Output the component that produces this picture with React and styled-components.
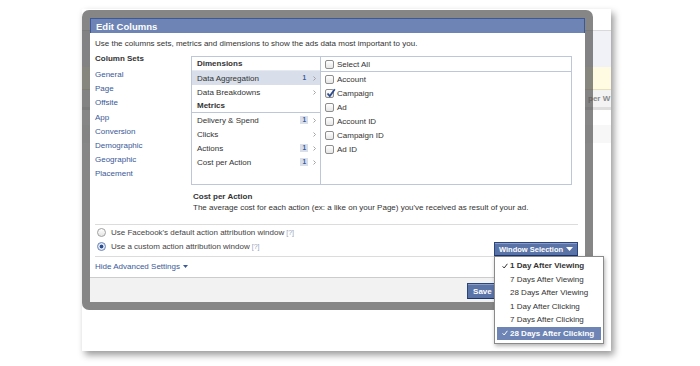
import React from 'react';
import styled, { createGlobalStyle } from 'styled-components';

const GlobalStyle = createGlobalStyle`
  html, body { margin: 0; padding: 0; background: #fff; }
  body {
    width: 700px;
    height: 366px;
    overflow: hidden;
    font-family: "Liberation Sans", Arial, sans-serif;
    font-size: 8px;
    color: #333;
  }
`;

const Stage = styled.div`
  padding: 9px 0 0 82px;
`;

const Page = styled.div`
  position: relative;
  width: 529px;
  height: 342px;
  background: #fff;
  box-shadow: 3px 4px 7px rgba(0, 0, 0, 0.4);
  display: flex;
  flex-direction: column;
`;

const Band = styled.div`
  flex: none;
  height: ${p => p.$h}px;
  box-sizing: border-box;
  background: ${p => p.$bg || '#fff'};
  border-bottom: ${p => (p.$line ? `${p.$lw || 1}px solid ${p.$line}` : 'none')};
  display: flex;
  align-items: center;
  padding-left: 506px;
  font-weight: bold;
  color: #8a8a8a;
  white-space: nowrap;
  overflow: hidden;
`;

const Dialog = styled.div`
  position: absolute;
  left: 0;
  top: 1px;
  width: 495px;
  border: 8px solid rgba(82, 82, 82, 0.7);
  border-radius: 7px;
  background-clip: padding-box;
`;

const Inner = styled.div`
  height: 284px;
  background: #fff;
  display: flex;
  flex-direction: column;
`;

const TitleBar = styled.div`
  flex: none;
  height: 15px;
  box-sizing: border-box;
  background: #6d84b4;
  border: 1px solid #3b5998;
  border-bottom: none;
  color: #fff;
  font-size: 9.5px;
  font-weight: bold;
  padding-left: 5px;
  display: flex;
  align-items: center;
`;

const Body = styled.div`
  flex: 1;
  padding: 5px 7px 0 5px;
  display: flex;
  flex-direction: column;
`;

const Intro = styled.div`
  line-height: 12px;
`;

const Columns = styled.div`
  display: flex;
  margin-top: 2px;
`;

const SetList = styled.div`
  width: 96px;
  flex: none;
  display: flex;
  flex-direction: column;
`;

const SetHeading = styled.div`
  font-weight: bold;
  line-height: 14px;
  margin-bottom: 2px;
`;

const SetLink = styled.a`
  color: #3b5998;
  line-height: 14.2px;
  text-decoration: none;
`;

const RightArea = styled.div`
  width: 381px;
  display: flex;
  flex-direction: column;
`;

const Picker = styled.div`
  margin-top: 4px;
  height: 129px;
  box-sizing: border-box;
  border: 1px solid #bdc7d8;
  display: flex;
`;

const Categories = styled.div`
  width: 129px;
  flex: none;
  box-sizing: border-box;
  border-right: 1px solid #bdc7d8;
`;

const CatHeader = styled.div`
  height: 14px;
  box-sizing: border-box;
  padding-left: 5px;
  font-weight: bold;
  display: flex;
  align-items: center;
  border-bottom: 1px solid ${p => (p.$line ? '#bdc7d8' : '#e5e9f0')};
`;

const CatRow = styled.div`
  height: 14px;
  padding: 0 4px 0 5px;
  display: flex;
  align-items: center;
  background: ${p => (p.$active ? '#d8dfea' : 'transparent')};
`;

const CatName = styled.span`
  flex: 1;
`;

const Badge = styled.span`
  height: 8px;
  line-height: 8px;
  padding: 0 2px;
  background: #d8dfea;
  color: #3b5998;
  font-size: 6.5px;
  font-weight: bold;
  margin-right: 5px;
`;

const Fields = styled.div`
  flex: 1;
  display: flex;
  flex-direction: column;
`;

const FieldRow = styled.div`
  height: ${p => (p.$head ? 15 : 14)}px;
  box-sizing: border-box;
  padding-left: 4px;
  display: flex;
  align-items: center;
  border-bottom: ${p => (p.$head ? '1px solid #bdc7d8' : 'none')};
`;

const Box = styled.span`
  width: 9px;
  height: 9px;
  box-sizing: border-box;
  border: 1px solid #8e8e8e;
  border-radius: 2px;
  background: linear-gradient(#fff, #e6e6e6);
  margin-right: 3px;
  position: relative;
  flex: none;
  svg { position: absolute; left: 0; top: -2px; }
`;

const Explain = styled.div`
  margin-top: 6px;
  padding-left: 2px;
  line-height: 11px;
`;

const ExplainTitle = styled.div`
  font-weight: bold;
`;

const Options = styled.div`
  margin-top: 11px;
  border-top: 1px solid #dcdcdc;
  border-bottom: 1px solid #dcdcdc;
`;

const OptionRow = styled.div`
  height: ${p => p.$h}px;
  display: flex;
  align-items: flex-start;
`;

const OptionLabel = styled.label`
  flex: 1;
  height: 14px;
  padding-left: 2px;
  display: flex;
  align-items: center;
  color: #444;
`;

const Radio = styled.span`
  width: 9px;
  height: 9px;
  box-sizing: border-box;
  border-radius: 50%;
  border: 1px solid ${p => (p.$on ? '#6a83b6' : '#a0a0a0')};
  background: ${p => (p.$on ? 'radial-gradient(circle, #2c4d8f 0 1.6px, #dfe6f3 2.2px)' : 'linear-gradient(#fff, #e4e4e4)')};
  margin-right: 5px;
  flex: none;
`;

const Hint = styled.span`
  color: #98a2b8;
  font-size: 7px;
  margin-left: 2px;
`;

const Dropdown = styled.div`
  position: relative;
  align-self: flex-end;
`;

const BlueButton = styled.button`
  height: ${p => p.$h || 14}px;
  box-sizing: border-box;
  padding: 0 ${p => p.$pad || 5}px;
  width: ${p => (p.$w ? `${p.$w}px` : 'auto')};
  border: 1px solid #29447e;
  border-bottom-color: #1a356e;
  background: #5b74a8;
  box-shadow: inset 0 1px 0 #8a9cc2;
  color: #fff;
  font-family: inherit;
  font-size: ${p => p.$fs || 8}px;
  font-weight: bold;
  white-space: nowrap;
  display: flex;
  align-items: center;
  justify-content: space-between;
  cursor: pointer;
`;

const GrayButton = styled(BlueButton)`
  background: #eee;
  border-color: #999 #999 #888;
  box-shadow: inset 0 1px 0 #fff;
  color: #333;
`;

const Menu = styled.div`
  position: absolute;
  top: 100%;
  left: 0;
  width: 110px;
  box-sizing: border-box;
  background: #fff;
  border: 1px solid #8a8a8a;
  box-shadow: 1px 2px 4px rgba(0, 0, 0, 0.3);
  padding: 2px 2px 3px;
  z-index: 2;
`;

const MenuItem = styled.div`
  height: 13.5px;
  padding-left: 5px;
  display: flex;
  align-items: center;
  white-space: nowrap;
  font-weight: ${p => (p.$bold ? 'bold' : 'normal')};
  background: ${p => (p.$hl ? '#6d84b4' : 'transparent')};
  color: ${p => (p.$hl ? '#fff' : '#333')};
`;

const Tick = styled.span`
  width: 8px;
  flex: none;
  display: flex;
  align-items: center;
`;

const Advanced = styled.a`
  height: 19px;
  display: flex;
  align-items: center;
  gap: 3px;
  color: #3b5998;
  text-decoration: none;
`;

const Footer = styled.div`
  flex: none;
  height: 25px;
  box-sizing: border-box;
  background: #f2f2f2;
  border-top: 1px solid #cccccc;
  display: flex;
  align-items: center;
  justify-content: flex-end;
  gap: 4px;
  padding: 2px 39px 0 0;
`;

const Chevron = () => (
  <svg width="3" height="5" viewBox="0 0 3 5">
    <path d="M0.5 0.5 L2.5 2.5 L0.5 4.5" fill="none" stroke="#9a9a9a" strokeWidth="0.9" />
  </svg>
);

const Caret = ({ color = '#fff', w = 7, h = 4 }) => (
  <svg width={w} height={h} viewBox="0 0 7 4">
    <path d="M0 0 H7 L3.5 4 Z" fill={color} />
  </svg>
);

const CheckMark = ({ color }) => (
  <svg width="6" height="6" viewBox="0 0 6 6">
    <path d="M0.6 3.3 L2.2 5 L5.4 0.8" fill="none" stroke={color} strokeWidth="1" />
  </svg>
);

const columnSets = ['General', 'Page', 'Offsite', 'App', 'Conversion', 'Demographic', 'Geographic', 'Placement'];

const metrics = [
  { name: 'Delivery & Spend', count: 1 },
  { name: 'Clicks' },
  { name: 'Actions', count: 1 },
  { name: 'Cost per Action', count: 1 },
];

const fields = [
  { name: 'Account' },
  { name: 'Campaign', on: true },
  { name: 'Ad' },
  { name: 'Account ID' },
  { name: 'Campaign ID' },
  { name: 'Ad ID' },
];

const windows = [
  '1 Day After Viewing',
  '7 Days After Viewing',
  '28 Days After Viewing',
  '1 Day After Clicking',
  '7 Days After Clicking',
  '28 Days After Clicking',
];

const CheckBox = ({ on }) => (
  <Box>
    {on && (
      <svg width="10" height="10" viewBox="0 0 10 10">
        <path d="M1.5 5.5 L3.8 8 L8.8 1.2" fill="none" stroke="#2b4a8c" strokeWidth="1.8" />
      </svg>
    )}
  </Box>
);

const App = () => (
  <Stage>
    <GlobalStyle />
    <Page>
      <Band $h={22} $line="#d9d9d9" />
      <Band $h={36} $bg="#f0f2f7" />
      <Band $h={23} $bg="#fffbe3" $line="#e6e0bd" />
      <Band $h={20} $bg="#f3f3f3" $line="#dedede" $lw={3}>per W</Band>
      <Band $h={15} />
      <Band $h={18} $bg="#f7f7f7" />

      <Dialog>
        <Inner>
          <TitleBar>Edit Columns</TitleBar>
          <Body>
            <Intro>Use the columns sets, metrics and dimensions to show the ads data most important to you.</Intro>
            <Columns>
              <SetList>
                <SetHeading>Column Sets</SetHeading>
                {columnSets.map(s => (
                  <SetLink key={s} href="#">{s}</SetLink>
                ))}
              </SetList>
              <RightArea>
                <Picker>
                  <Categories>
                    <CatHeader>Dimensions</CatHeader>
                    <CatRow $active>
                      <CatName>Data Aggregation</CatName>
                      <Badge>1</Badge>
                      <Chevron />
                    </CatRow>
                    <CatRow>
                      <CatName>Data Breakdowns</CatName>
                      <Chevron />
                    </CatRow>
                    <CatHeader $line>Metrics</CatHeader>
                    {metrics.map(m => (
                      <CatRow key={m.name}>
                        <CatName>{m.name}</CatName>
                        {m.count && <Badge>{m.count}</Badge>}
                        <Chevron />
                      </CatRow>
                    ))}
                  </Categories>
                  <Fields>
                    <FieldRow $head>
                      <CheckBox />
                      Select All
                    </FieldRow>
                    {fields.map(f => (
                      <FieldRow key={f.name}>
                        <CheckBox on={f.on} />
                        {f.name}
                      </FieldRow>
                    ))}
                  </Fields>
                </Picker>
                <Explain>
                  <ExplainTitle>Cost per Action</ExplainTitle>
                  <div>The average cost for each action (ex: a like on your Page) you've received as result of your ad.</div>
                </Explain>
              </RightArea>
            </Columns>

            <Options>
              <OptionRow $h={14}>
                <OptionLabel>
                  <Radio />
                  Use Facebook's default action attribution window
                  <Hint>[?]</Hint>
                </OptionLabel>
              </OptionRow>
              <OptionRow $h={17}>
                <OptionLabel>
                  <Radio $on />
                  Use a custom action attribution window
                  <Hint>[?]</Hint>
                </OptionLabel>
                <Dropdown>
                  <BlueButton $w={84} $pad={4} $fs={7.5}>
                    Window Selection
                    <Caret />
                  </BlueButton>
                  <Menu>
                    {windows.map((w, i) => {
                      const hl = i === windows.length - 1;
                      const sel = i === 0 || hl;
                      return (
                        <MenuItem key={w} $bold={sel} $hl={hl}>
                          <Tick>{sel && <CheckMark color={hl ? '#fff' : '#333'} />}</Tick>
                          {w}
                        </MenuItem>
                      );
                    })}
                  </Menu>
                </Dropdown>
              </OptionRow>
            </Options>

            <Advanced href="#">
              Hide Advanced Settings
              <Caret color="#3b5998" w={5} h={3} />
            </Advanced>
          </Body>
          <Footer>
            <BlueButton $h={16} $pad={5}>Save</BlueButton>
            <GrayButton $h={16} $pad={8}>Cancel</GrayButton>
          </Footer>
        </Inner>
      </Dialog>
    </Page>
  </Stage>
);

export default App;
